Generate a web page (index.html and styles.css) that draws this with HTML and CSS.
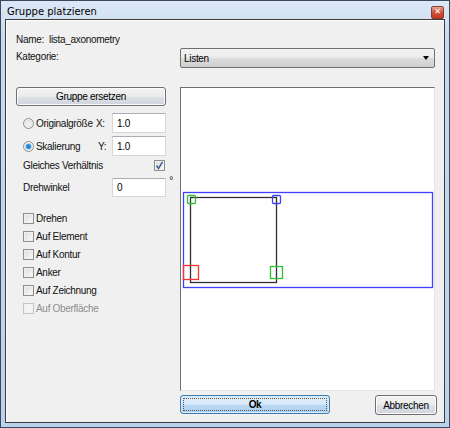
FILE: index.html
```html
<!DOCTYPE html>
<html>
<head>
<meta charset="utf-8">
<link rel="stylesheet" href="styles.css">
</head>
<body>
<div class="window">
  <div class="titlebar">
    <span class="title">Gruppe platzieren</span>
    <span class="close">&#x2715;</span>
  </div>
  <div class="client">
    <div class="name-row"><span>Name:</span><span>lista_axonometry</span></div>
    <div class="grid">
      <div class="cat-label">Kategorie:</div>
      <div class="combo"><span>Listen</span><span class="arrow"></span></div>

      <div class="left">
        <div class="btn btn-wide">Gruppe ersetzen</div>
        <div class="row r1">
          <span class="radio"></span><span class="rlabel">Originalgröße</span>
          <span class="axis">X:</span><span class="input">1.0</span>
        </div>
        <div class="row r2">
          <span class="radio on"></span><span class="rlabel">Skalierung</span>
          <span class="axis ax-y">Y:</span><span class="input">1.0</span>
        </div>
        <div class="row r3">
          <span class="plain">Gleiches Verhältnis</span>
          <span class="check checked"><svg viewBox="0 0 9 9" width="9" height="9"><path d="M1.5 4.5 L3.5 7.5 L7.5 0.8" fill="none" stroke="#4a5f97" stroke-width="1.5"/></svg></span>
        </div>
        <div class="row r4">
          <span class="plain">Drehwinkel</span>
          <span class="input in-rot">0</span><span class="deg">°</span>
        </div>
        <div class="checks">
          <div class="crow"><span class="check"></span>Drehen</div>
          <div class="crow"><span class="check"></span>Auf Element</div>
          <div class="crow"><span class="check"></span>Auf Kontur</div>
          <div class="crow"><span class="check"></span>Anker</div>
          <div class="crow"><span class="check"></span>Auf Zeichnung</div>
          <div class="crow disabled"><span class="check"></span>Auf Oberfläche</div>
        </div>
      </div>

      <div class="right">
        <div class="preview">
          <svg class="canvas" width="253" height="302" viewBox="0 0 253 302">
            <rect x="2.5" y="104.5" width="249" height="95" fill="none" stroke="#4040ff" stroke-width="1.3"/>
            <rect x="9.5" y="109.5" width="86" height="85" fill="none" stroke="#303030" stroke-width="1.3"/>
            <rect x="6.5" y="107.5" width="8" height="8" fill="none" stroke="#30c030" stroke-width="1.3" rx="1"/>
            <rect x="91.5" y="107.5" width="8" height="8" fill="none" stroke="#4040ff" stroke-width="1.3" rx="1"/>
            <rect x="2.5" y="177.5" width="15" height="14" fill="none" stroke="#ff3030" stroke-width="1.3"/>
            <rect x="89.5" y="178.5" width="12" height="12" fill="none" stroke="#30c030" stroke-width="1.3"/>
          </svg>
        </div>
        <div class="buttons">
          <div class="btn btn-ok"><span>Ok</span></div>
          <div class="btn btn-cancel">Abbrechen</div>
        </div>
      </div>
    </div>
  </div>
</div>
</body>
</html>
```

FILE: styles.css
```css
* { box-sizing: border-box; }
html, body { margin: 0; padding: 0; }
body {
  width: 450px;
  height: 428px;
  font-family: "Liberation Sans", Arial, sans-serif;
  font-size: 10px;
  letter-spacing: -0.3px;
  color: #111;
  overflow: hidden;
}
.window {
  width: 450px;
  height: 428px;
  border: 1px solid #3a4a5c;
  background: linear-gradient(#dce8f6, #c6d9ef 40px, #bcd2ec);
  display: flex;
  flex-direction: column;
  padding: 0 4px 4px 4px;
}
.titlebar {
  height: 18px;
  display: flex;
  align-items: center;
  justify-content: space-between;
  padding-left: 2px;
}
.title {
  font-family: "DejaVu Sans", sans-serif;
  font-size: 10px;
  letter-spacing: 0;
  color: #000;
  margin-top: 3px;
}
.close {
  width: 13px;
  height: 13px;
  margin-top: 4px;
  margin-right: 1px;
  background: linear-gradient(#e8a493, #d0503a 50%, #c23a24);
  border: 1px solid #8a3a30;
  border-radius: 2px;
  color: #fff;
  font-family: "DejaVu Sans", sans-serif;
  font-size: 8px;
  font-weight: bold;
  display: flex;
  align-items: center;
  justify-content: center;
  line-height: 1;
}
.client {
  flex: 1;
  background: #f0f0f0;
  border: 1px solid #3c3c3c;
  box-shadow: inset 1px 1px 0 #fff;
  padding: 13px 0 0 10px;
}
.name-row {
  height: 13px;
  line-height: 13px;
  display: flex;
  gap: 5px;
}
.grid {
  display: grid;
  grid-template-columns: 150px 255px;
  column-gap: 14px;
  margin-top: 2px;
}
.cat-label {
  height: 20px;
  line-height: 18px;
}
.combo {
  height: 20px;
  border: 1px solid #707070;
  border-radius: 2px;
  background: linear-gradient(#f2f2f2, #ebebeb 50%, #dddddd 51%, #cfcfcf);
  display: flex;
  align-items: center;
  justify-content: space-between;
  padding: 0 5px 0 3px;
  color: #000;
}
.arrow {
  width: 0;
  height: 0;
  border-left: 3.5px solid transparent;
  border-right: 3.5px solid transparent;
  border-top: 4px solid #000;
}
.left {
  margin-top: 19px;
  display: flex;
  flex-direction: column;
}
.right {
  margin-top: 19px;
  display: flex;
  flex-direction: column;
}
.btn {
  border: 1px solid #707070;
  border-radius: 3px;
  background: linear-gradient(#f2f2f2, #ebebeb 50%, #dde1e8 51%, #d0d5dd);
  box-shadow: inset 0 0 0 1px #fcfcfc;
  display: flex;
  align-items: center;
  justify-content: center;
  color: #000;
}
.btn-wide {
  height: 19px;
  width: 150px;
}
.row {
  display: flex;
  align-items: center;
  position: relative;
}
.r1 { margin-top: 7px; height: 20px; padding-left: 7px; }
.r2 { margin-top: 3px; height: 20px; padding-left: 7px; }
.r3 { margin-top: 3px; height: 13px; padding-left: 7px; justify-content: space-between; }
.r4 { margin-top: 6px; height: 19px; padding-left: 7px; }
.radio {
  width: 11px;
  height: 11px;
  border-radius: 50%;
  border: 1px solid #8e8f8f;
  background: radial-gradient(circle at 50% 60%, #f4f4f4, #d4d4d4);
  box-shadow: inset 0 0 0 1px #f4f4f4;
  margin-right: 2px;
  flex: none;
}
.radio.on {
  background: radial-gradient(circle, #1e6fc0 0, #3a9ae6 2.2px, #c9dcef 3.2px, #e8eef5 5.5px);
}
.rlabel { width: 60px; flex: none; }
.axis { width: 16px; flex: none; }
.ax-y { padding-left: 2px; }
.input {
  width: 54px;
  height: 20px;
  background: #fff;
  border: 1px solid #d3d6da;
  border-top-color: #abadb3;
  padding-left: 4px;
  display: flex;
  align-items: center;
  color: #000;
  margin-left: auto;
}
.plain { flex: none; }
.check {
  width: 11px;
  height: 11px;
  border: 1px solid #8e8f8f;
  background: linear-gradient(135deg, #dcdcdc, #fbfbfb);
  box-shadow: inset 0 0 0 1px #f0f0f0;
  flex: none;
  display: flex;
  align-items: center;
  justify-content: center;
}
.check.checked { margin-right: 1px; }
.in-rot { height: 19px; }
.deg {
  position: absolute;
  right: -7px;
  top: -3px;
  font-size: 10px;
}
.checks {
  margin-top: 12px;
  padding-left: 7px;
  display: flex;
  flex-direction: column;
}
.crow {
  height: 18px;
  display: flex;
  align-items: center;
  gap: 2px;
}
.crow.disabled { color: #8d8d8d; }
.crow.disabled .check { border-color: #c4c4c4; background: #f4f4f4; }
.preview {
  width: 255px;
  height: 304px;
  background: #fff;
  border: 1px solid #e4e4e4;
  border-top: 1px solid #707070;
  border-left: 1px solid #707070;
}
.canvas { display: block; }
.buttons {
  margin-top: 4px;
  display: flex;
  justify-content: space-between;
  width: 257px;
}
.btn-ok {
  width: 150px;
  height: 19px;
  font-weight: bold;
  border-color: #3c7fb1;
  background: linear-gradient(#e3f0fb, #d4e7f8 50%, #b9d8f3 51%, #aed0ef);
  box-shadow: inset 0 0 0 1px #d0e8f8;
}
.btn-ok span {
  display: flex;
  align-items: center;
  justify-content: center;
  width: 144px;
  height: 13px;
  border: 1px dotted #555;
}
.btn-cancel {
  width: 62px;
  height: 20px;
}
```
